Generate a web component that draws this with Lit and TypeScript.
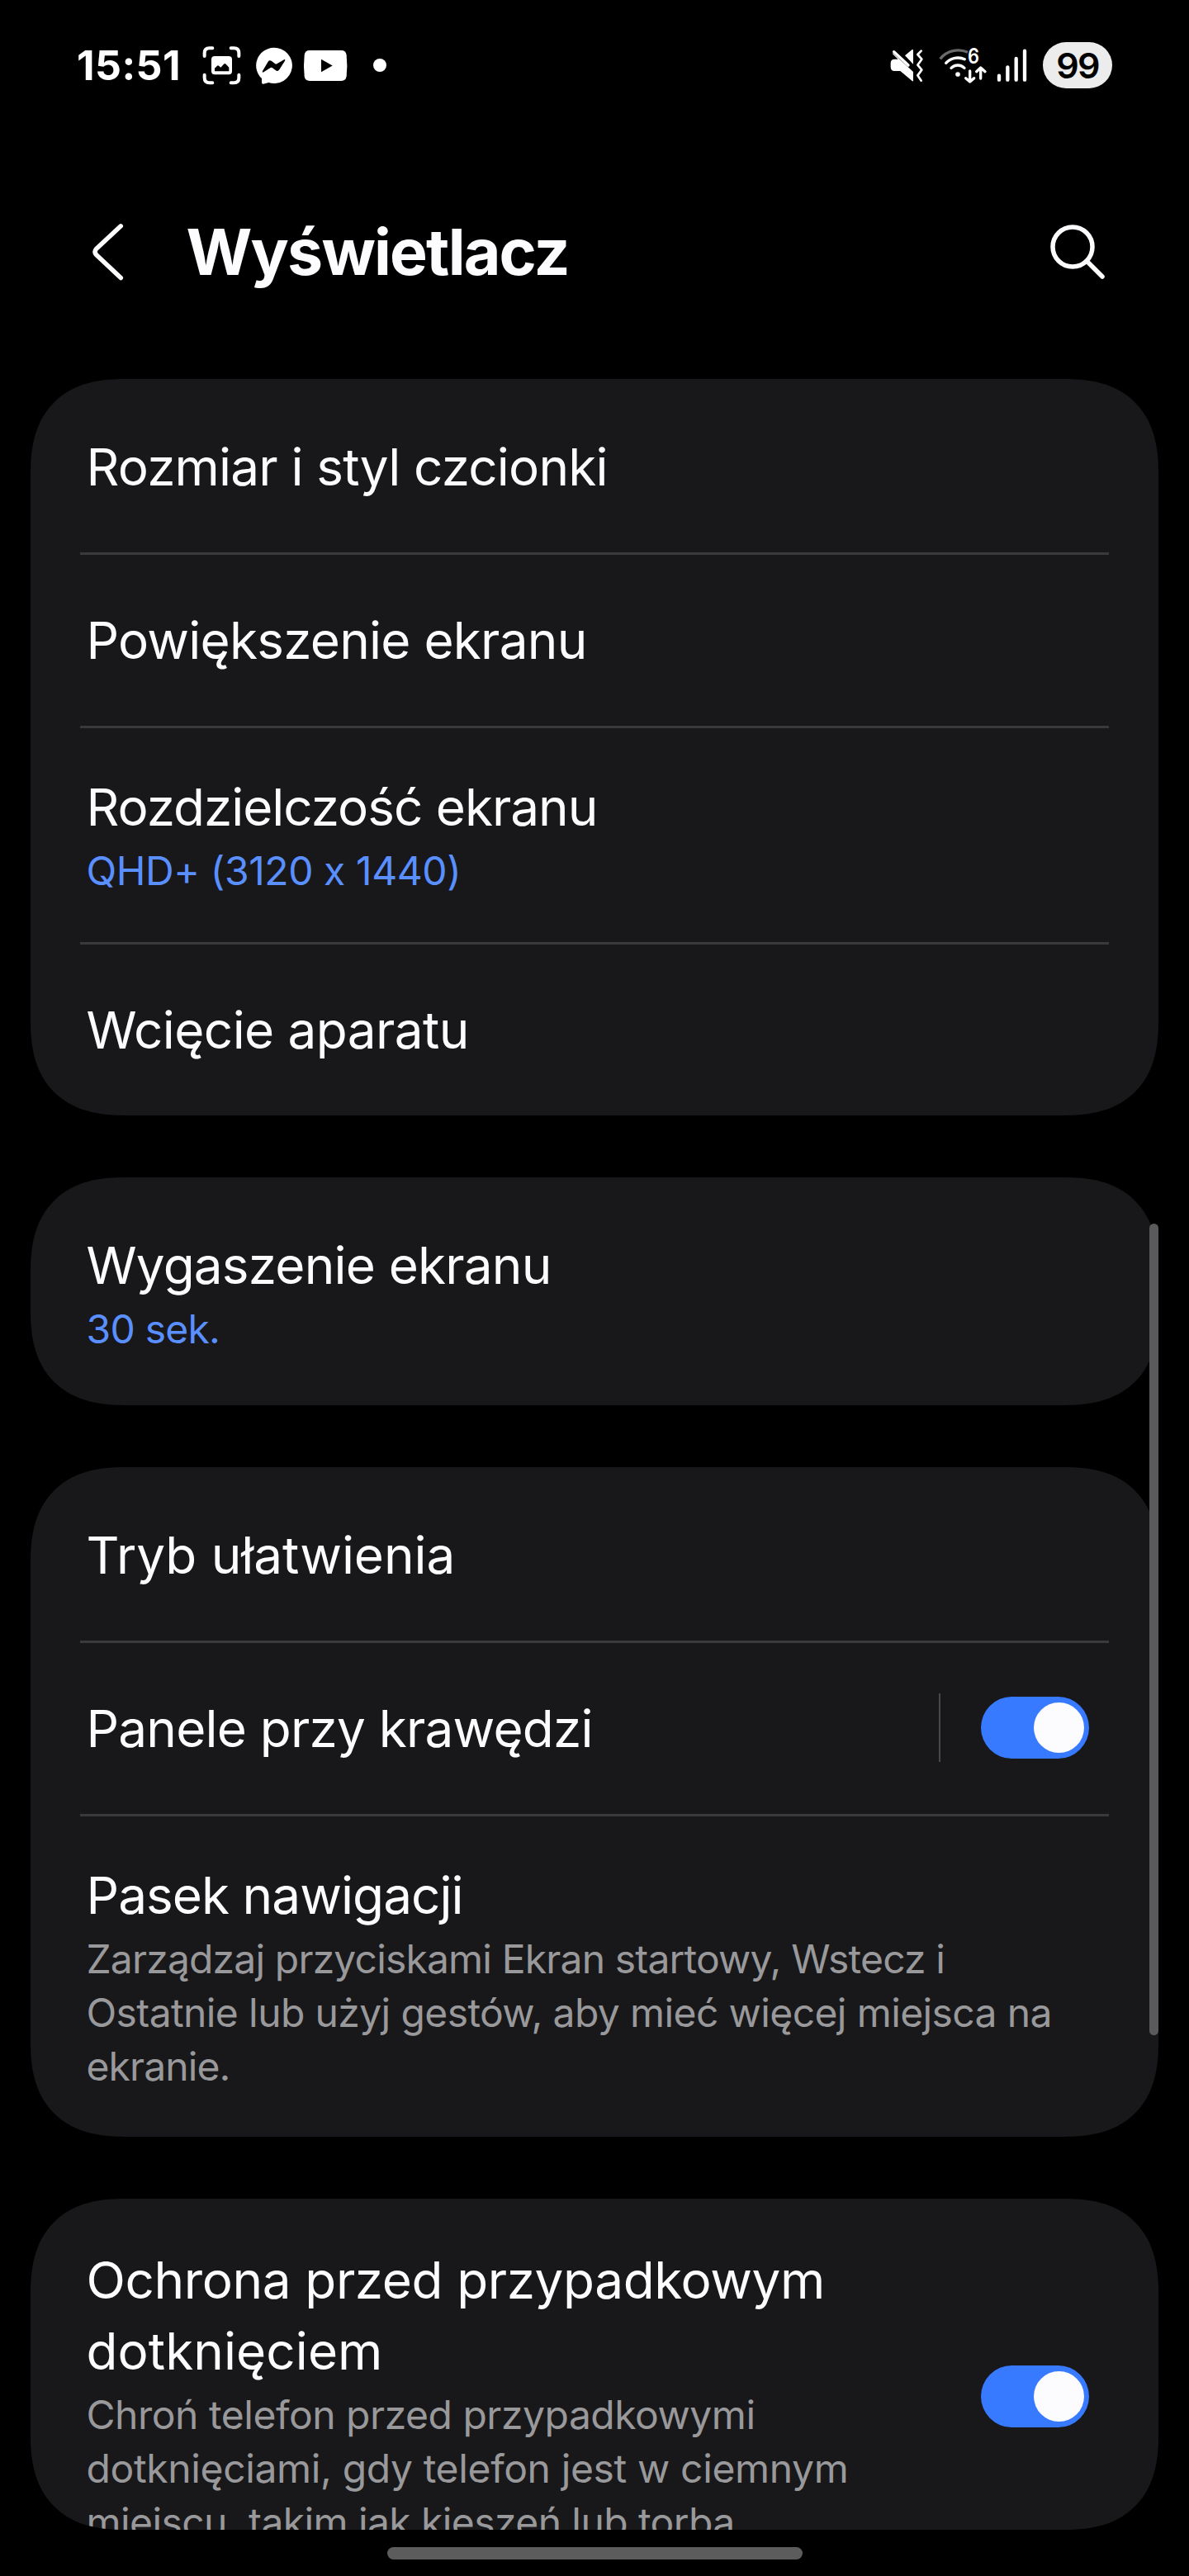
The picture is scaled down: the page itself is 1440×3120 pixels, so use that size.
import { LitElement, html, css, svg, nothing } from "lit";
import { customElement, property } from "lit/decorators.js";

/** One rendered line of text and its letter-spacing in pixels. */
type Line = [text: string, tracking: number];

interface Row {
  title: Line[];
  sub?: Line[];
  accent?: boolean;
  toggle?: boolean;
  split?: boolean;
}

interface Group {
  rows: Row[];
  kind?: "single" | "cut";
}

const GROUPS: Group[] = [
  {
    rows: [
      { title: [["Rozmiar i styl czcionki", -0.81]] },
      { title: [["Powiększenie ekranu", -0.75]] },
      {
        title: [["Rozdzielczość ekranu", -1.02]],
        sub: [["QHD+ (3120 x 1440)", -0.4]],
        accent: true,
      },
      { title: [["Wcięcie aparatu", -0.56]] },
    ],
  },
  {
    kind: "single",
    rows: [
      { title: [["Wygaszenie ekranu", -0.8]], sub: [["30 sek.", -0.75]], accent: true },
    ],
  },
  {
    rows: [
      { title: [["Tryb ułatwienia", -0.04]] },
      { title: [["Panele przy krawędzi", -0.78]], toggle: true, split: true },
      {
        title: [["Pasek nawigacji", -0.94]],
        sub: [
          ["Zarządzaj przyciskami Ekran startowy, Wstecz i", -0.83],
          ["Ostatnie lub użyj gestów, aby mieć więcej miejsca na", -0.61],
          ["ekranie.", -0.9],
        ],
      },
    ],
  },
  {
    kind: "cut",
    rows: [
      {
        title: [
          ["Ochrona przed przypadkowym", -0.38],
          ["dotknięciem", 0.08],
        ],
        sub: [
          ["Chroń telefon przed przypadkowymi", -0.47],
          ["dotknięciami, gdy telefon jest w ciemnym", -0.36],
          ["miejscu, takim jak kieszeń lub torba.", -0.58],
        ],
        toggle: true,
      },
    ],
  },
];

@customElement("status-bar")
export class StatusBar extends LitElement {
  static styles = css`
    :host {
      display: flex;
      align-items: center;
      justify-content: space-between;
      height: 158px;
      padding: 0 93px;
      box-sizing: border-box;
      color: #fff;
    }
    .side {
      display: flex;
      align-items: center;
    }
    svg {
      display: block;
    }
    .time {
      width: 152px;
      font-size: 50px;
      font-weight: 700;
      letter-spacing: 0.45px;
      line-height: 60px;
      white-space: nowrap;
    }
    .left-icons {
      width: 228px;
      height: 50px;
    }
    .right-icons {
      width: 180px;
      height: 50px;
    }
    .six {
      font: 600 76px "Inter", sans-serif;
    }
    .battery {
      width: 84px;
      height: 56px;
      margin-left: 11px;
      border-radius: 28px;
      background: #ececec;
      color: #000;
      font-size: 43px;
      font-weight: 600;
      letter-spacing: -1.7px;
      line-height: 56px;
      text-align: center;
    }
  `;

  render() {
    return html`
      <div class="side">
        <div class="time">15:51</div>
        <svg class="left-icons" viewBox="495 72 684 150" fill="#fff">
          <g fill="none" stroke="#fff" stroke-width="12" stroke-linecap="round">
            <path d="M503 114V103Q503 85 521 85H532" />
            <path d="M599 85H610Q628 85 628 103V114" />
            <path d="M628 182V193Q628 211 610 211H599" />
            <path d="M532 211H521Q503 211 503 193V182" />
          </g>
          <rect x="528" y="114" width="75" height="67" rx="12" />
          <path
            fill="#000"
            d="M540 169V158L549 149Q552 147 555 149L562 155L573 143Q577 139 581 143L592 155V169Z"
          />
          <path
            d="M754 83A66 65 0 1 1 736 210L717 215Q711 216 711 209V195A66 65 0 0 1 754 83Z"
          />
          <path
            fill="#000"
            d="M714 168L734 134Q739 127 747 132L760 142Q763 144 766 142L792 127Q798 124 795 131L775 163Q770 171 762 166L749 156Q746 154 743 156L718 172Q711 175 714 168Z"
          />
          <path
            d="M885 93H1000Q1017 93 1019 110Q1023 148 1019 187Q1017 204 1000 204H885Q868 204 866 187Q862 148 866 110Q868 93 885 93Z"
          />
          <path fill="#000" d="M927 125L968 148.500L927 172Z" />
          <circle cx="1140" cy="147" r="24" />
        </svg>
      </div>
      <div class="side">
        <svg class="right-icons" viewBox="66 72 540 150" fill="#fff">
          <path
            d="M94 103L168 171V203Q168 207 164 204L121 168H100Q86 168 86 154V139Q86 125 100 125H113L93 106Z"
          />
          <path d="M98 98L150 147" fill="none" stroke="#fff" stroke-width="10" stroke-linecap="round" />
          <path d="M138 112L163 91Q168 88 168 94V143Z" />
          <path
            d="M197 95L184 108L199 125L184 146L199 164L184 184L197 203"
            fill="none"
            stroke="#fff"
            stroke-width="8"
            stroke-linecap="round"
            stroke-linejoin="round"
          />
          <g fill="none" stroke="#fff" stroke-width="10" stroke-linecap="round">
            <path stroke="#6a6a6a" stroke-linecap="butt" d="M266 124A85 85 0 0 1 366 100" />
            <path d="M287 139A60 60 0 0 1 355 125" />
            <path d="M306 157A34 34 0 0 1 354 157" />
          </g>
          <circle cx="330" cy="180" r="8.500" />
          ${svg`<text class="six" x="366" y="142" textLength="42" lengthAdjust="spacingAndGlyphs">6</text>`}
          <g fill="none" stroke="#fff" stroke-width="10" stroke-linecap="round" stroke-linejoin="round">
            <path d="M374 168V204M359 194L374 207L389 194" />
            <path d="M413 195V158M398 170L413 156L429 170" />
            <path stroke-width="13" d="M480 185V200M511 154V200M542 123V200M573 95V200" />
          </g>
        </svg>
        <div class="battery">99</div>
      </div>
    `;
  }
}

@customElement("title-bar")
export class TitleBar extends LitElement {
  static styles = css`
    :host {
      display: flex;
      align-items: center;
      height: 301px;
      padding: 0 97px 8px 108px;
      box-sizing: border-box;
      color: #fcfcff;
    }
    svg {
      display: block;
      fill: none;
      stroke: currentColor;
      stroke-width: 5.5px;
      stroke-linecap: round;
      stroke-linejoin: round;
    }
    .back {
      width: 44px;
      height: 76px;
      margin-right: 73.5px;
    }
    .name {
      flex: 1;
      margin: 0;
      font-size: 77px;
      font-weight: 700;
      letter-spacing: -1.83px;
      line-height: 96px;
    }
    .search {
      width: 76px;
      height: 76px;
    }
  `;

  render() {
    return html`
      <svg class="back" viewBox="108 266 44 76">
        <path d="M146.300 272.800L116.500 300.500Q113.500 304 116.500 307.500L146.300 335.500" />
      </svg>
      <h1 class="name">Wyświetlacz</h1>
      <svg class="search" viewBox="1267 266 76 76">
        <circle cx="1299" cy="298" r="24" />
        <path d="M1316.500 315.500L1335 334" />
      </svg>
    `;
  }
}

@customElement("settings-row")
export class SettingsRow extends LitElement {
  static styles = css`
    :host {
      display: flex;
      align-items: center;
      min-height: 207px;
      box-sizing: border-box;
      padding: 0 84px 0 67.5px;
    }
    .texts {
      flex: 1;
      min-width: 0;
      white-space: nowrap;
      font-feature-settings: "calt" 0;
    }
    .texts.two {
      padding: 53px 0 54px;
    }
    .texts.long {
      padding-bottom: 53px;
    }
    .title {
      font-size: 62px;
      line-height: 86px;
      color: #fcfcff;
    }
    .sub {
      margin-top: 1px;
      font-size: 48px;
      line-height: 65px;
      color: #99999c;
    }
    .sub.accent {
      color: #5a8fff;
    }
    .bar {
      width: 2px;
      height: 83px;
      margin: 0 49px 2px 0;
      background: #48484a;
    }
    .toggle {
      display: flex;
      justify-content: flex-end;
      align-items: center;
      width: 131px;
      height: 75px;
      margin-bottom: 2px;
      padding-right: 6px;
      box-sizing: border-box;
      border-radius: 37.5px;
      background: #387aff;
    }
    .knob {
      width: 61px;
      height: 61px;
      border-radius: 50%;
      background: #fcfcff;
    }
  `;

  @property({ attribute: false }) row!: Row;

  private lines(lines: Line[]) {
    return lines.map(
      ([text, tracking]) => html`<div style="letter-spacing:${tracking}px">${text}</div>`
    );
  }

  render() {
    const { title, sub, accent, toggle, split } = this.row;
    const size = sub ? (sub.length > 2 ? "two long" : "two") : "";
    return html`
      <div class="texts ${size}">
        <div class="title">${this.lines(title)}</div>
        ${sub ? html`<div class="sub ${accent ? "accent" : ""}">${this.lines(sub)}</div>` : nothing}
      </div>
      ${split ? html`<div class="bar"></div>` : nothing}
      ${toggle ? html`<div class="toggle"><div class="knob"></div></div>` : nothing}
    `;
  }
}

@customElement("app-root")
export class AppRoot extends LitElement {
  static styles = css`
    :host {
      display: block;
      position: relative;
      width: 1440px;
      height: 3120px;
      overflow: hidden;
      background: #000;
      font-family: "Inter", "Open Sans", sans-serif;
    }
    .list {
      display: flex;
      flex-direction: column;
      gap: 75px;
      padding: 0 37px;
    }
    .card {
      padding-top: 3px;
      border-radius: 97px;
      background: #18181a;
      overflow: hidden;
    }
    @supports (corner-shape: squircle) {
      .card {
        border-radius: 115px;
        corner-shape: superellipse(1.29);
      }
    }
    .card.single {
      padding: 11px 0 6px;
    }
    .card.cut {
      height: 401px;
      padding-top: 0;
    }
    .card.cut settings-row {
      padding-top: 3px;
    }
    .divider {
      height: 3px;
      margin: 0 60px;
      background: #3a3a3d;
    }
    .scroll {
      position: absolute;
      left: 1392px;
      top: 1482px;
      width: 11px;
      height: 983px;
      border-radius: 5.5px;
      background: #5a5a5c;
    }
    .home {
      width: 503px;
      height: 15px;
      margin: 21px auto 0;
      border-radius: 7.5px;
      background: #5c5c5c;
    }
  `;

  render() {
    return html`
      <status-bar></status-bar>
      <title-bar></title-bar>
      <div class="list">
        ${GROUPS.map(
          (group) => html`
            <section class="card ${group.kind ?? ""}">
              ${group.rows.map(
                (row, i) => html`
                  ${i > 0 ? html`<div class="divider"></div>` : nothing}
                  <settings-row .row=${row}></settings-row>
                `
              )}
            </section>
          `
        )}
      </div>
      <div class="home"></div>
      <div class="scroll"></div>
    `;
  }
}
